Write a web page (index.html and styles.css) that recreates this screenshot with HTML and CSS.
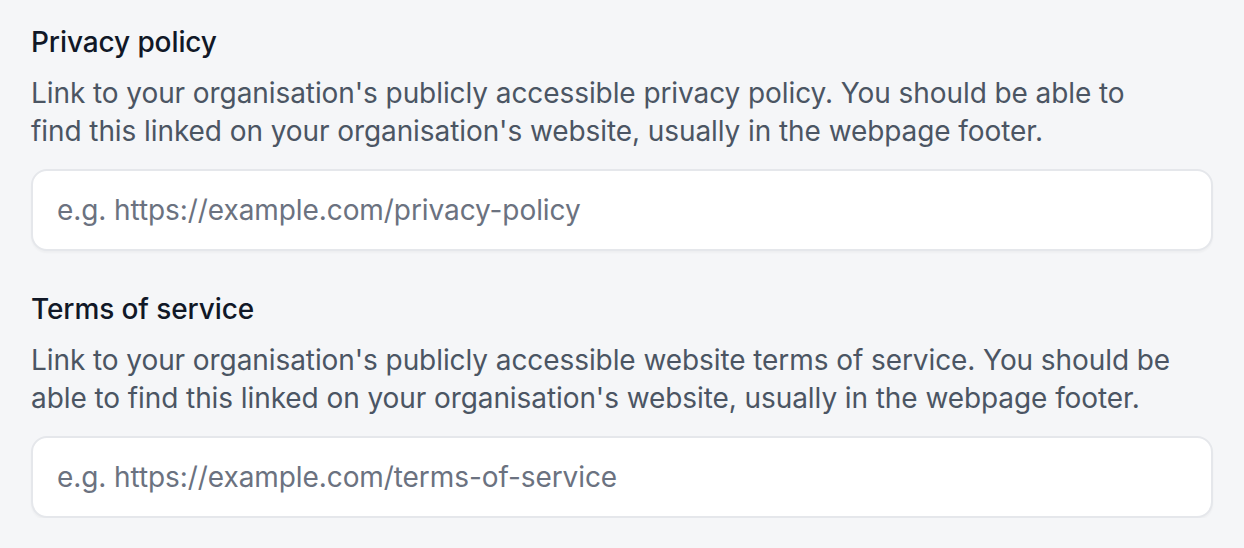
FILE: index.html
```html
<!DOCTYPE html>
<html>
<head>
<meta charset="utf-8">
<link rel="stylesheet" href="styles.css">
</head>
<body>
<div class="page">
  <section class="field">
    <h2 class="label">Privacy policy</h2>
    <p class="help">Link to your organisation's publicly accessible privacy policy. You should be able to find this linked on your organisation's website, usually in the webpage footer.</p>
    <input class="input" type="text" placeholder="e.g. https://example.com/privacy-policy">
  </section>
  <section class="field">
    <h2 class="label">Terms of service</h2>
    <p class="help">Link to your organisation's publicly accessible website terms of service. You should be able to find this linked on your organisation's website, usually in the webpage footer.</p>
    <input class="input" type="text" placeholder="e.g. https://example.com/terms-of-service">
  </section>
</div>
</body>
</html>
```
FILE: styles.css
```css
html, body {
  margin: 0;
  padding: 0;
  background: #f5f6f8;
}
body {
  font-family: Inter, "Noto Sans", sans-serif;
}
.page {
  padding: 24px 31px 0 31px;
  display: flex;
  flex-direction: column;
  gap: 40px;
}
.field {
  display: flex;
  flex-direction: column;
}
.label {
  margin: 0;
  font-size: 28px;
  line-height: 36px;
  font-weight: 500;
  color: #111827;
  letter-spacing: -0.1px;
}
.help {
  margin: 14px 0 0 0;
  font-size: 28px;
  line-height: 38px;
  color: #4b5563;
  letter-spacing: -0.08px;
  max-width: 1145px;
}
.input {
  margin-top: 19px;
  box-sizing: border-box;
  height: 82px;
  width: 100%;
  border: 2px solid #e5e7eb;
  border-radius: 16px;
  background: #fff;
  box-shadow: 0 2px 2px rgba(0,0,0,0.03);
  padding: 0 24px;
  font-family: Inter, "Noto Sans", sans-serif;
  font-size: 28px;
  letter-spacing: -0.08px;
  color: #111827;
  outline: none;
}
.input::placeholder {
  color: #6b7280;
}
```
